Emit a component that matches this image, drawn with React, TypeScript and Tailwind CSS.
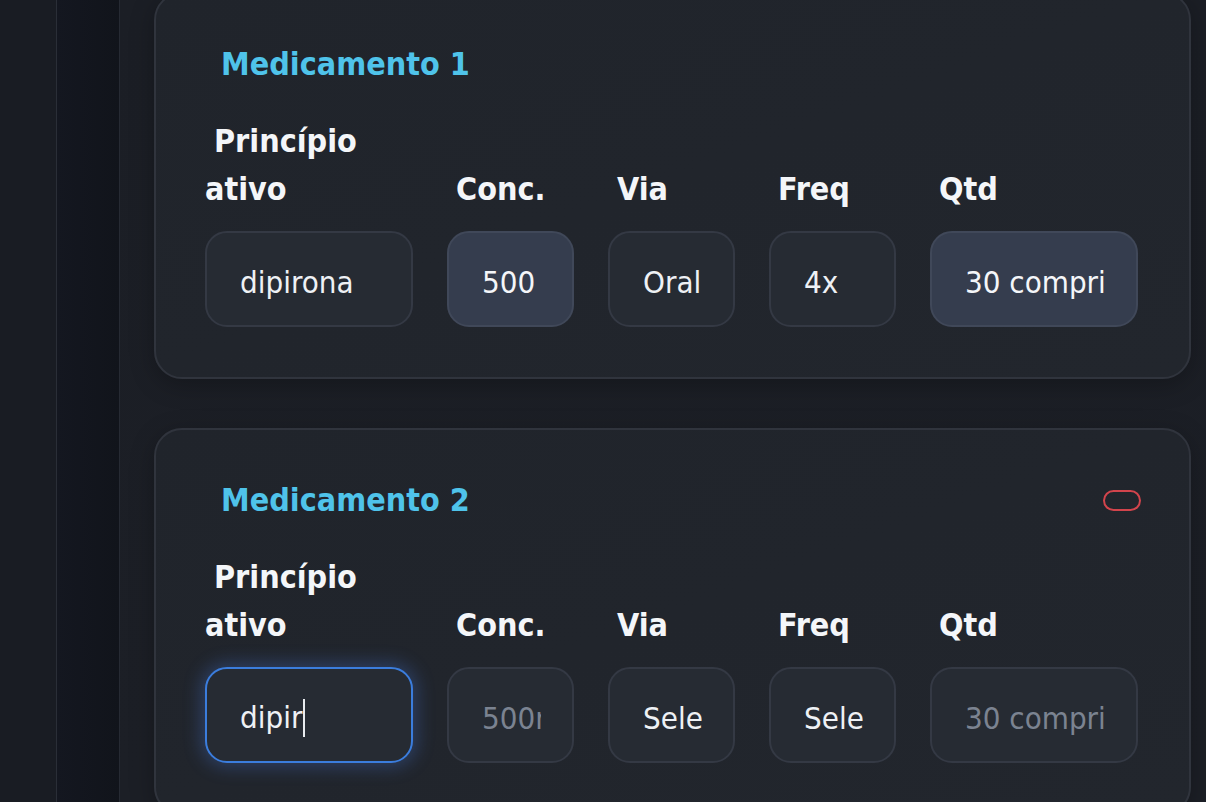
import React from "react";

const labelFont = "font-['DejaVu_Sans',sans-serif] [font-stretch:condensed]";

function Label({ first, second }: { first: string; second?: string }) {
  return (
    <div className={`${labelFont} text-[32px] leading-[48px] font-bold text-[#f4f6f9]`}>
      {second ? (
        <>
          <span className="pl-[9px]">{first}</span>
          <br />
          <span>{second}</span>
        </>
      ) : (
        <span className="pl-[9px]">{first}</span>
      )}
    </div>
  );
}

type FieldProps = {
  value?: string;
  placeholder?: string;
  tone?: "plain" | "filled" | "focus";
};

function Field({ value, placeholder, tone = "plain" }: FieldProps) {
  const base =
    "h-[96px] w-full rounded-[22px] border-2 pl-[33px] pr-[31px] pt-[5px] text-[31px] font-['DejaVu_Sans',sans-serif] [font-stretch:condensed] outline-none";
  if (tone === "focus") {
    return (
      <div
        className={`${base} flex items-center overflow-hidden border-[#3b7ddd] bg-[#262b33] text-[#eef1f5] shadow-[0_0_18px_4px_rgba(70,120,220,0.32)]`}
      >
        <span>{value}</span>
        <span className="ml-[1px] h-[38px] w-[2px] bg-[#e8ebef]" />
      </div>
    );
  }
  const colors =
    tone === "filled"
      ? "border-[#404859] bg-[#353d4e] text-[#f4f6f9]"
      : "border-[#343944] bg-[#262b33] text-[#eef1f5]";
  return (
    <input
      readOnly
      value={value ?? ""}
      placeholder={placeholder}
      className={`${base} ${colors} placeholder:text-[#7b8391]`}
    />
  );
}

type Row = {
  title: string;
  remove?: boolean;
  fields: FieldProps[];
};

function Card({ title, remove, fields }: Row) {
  return (
    <div className="rounded-[28px] border-2 border-[#30343d] bg-gradient-to-br from-[#20242b] to-[#22262d] pl-[48px] pr-[50px] pt-[50px] pb-[50px] shadow-[0_6px_24px_rgba(0,0,0,0.25)]">
      <div className="flex items-center justify-between">
        <h2 className={`${labelFont} ml-[17px] text-[32px] leading-[40px] font-bold text-[#4fc3ea]`}>
          {title}
        </h2>
        {remove && (
          <button className="mr-[-2px] h-[21px] w-[38px] rounded-full border-2 border-[#d2444c] bg-transparent" />
        )}
      </div>
      <div className="mt-[33px] ml-[1px] grid grid-cols-[208px_127px_127px_127px_208px] items-end gap-x-[34px] gap-y-[18px]">
        <Label first="Princípio" second="ativo" />
        <Label first="Conc." />
        <Label first="Via" />
        <Label first="Freq" />
        <Label first="Qtd" />
        {fields.map((f, i) => (
          <Field key={i} {...f} />
        ))}
      </div>
    </div>
  );
}

export default function App() {
  return (
    <div className="flex h-[802px] w-[1206px] overflow-hidden bg-[#1a1d24]">
      <div className="w-[57px] shrink-0 border-r border-[#2a2e37] bg-[#191c23]" />
      <div className="w-[63px] shrink-0 border-r border-[#262a33] bg-gradient-to-r from-[#141720] to-[#11141b]" />
      <main className="flex flex-1 flex-col bg-gradient-to-b from-[#1b1e25] to-[#1c1f26] pl-[34px] pr-[15px]">
        <div className="mt-[-8px] flex flex-col gap-[49px]">
          <Card
            title="Medicamento 1"
            fields={[
              { value: "dipirona" },
              { value: "500", tone: "filled" },
              { value: "Oral" },
              { value: "4x" },
              { value: "30 comprimidos", tone: "filled" },
            ]}
          />
          <Card
            title="Medicamento 2"
            remove
            fields={[
              { value: "dipir", tone: "focus" },
              { placeholder: "500mg" },
              { value: "Selecione" },
              { value: "Selecione" },
              { placeholder: "30 comprimidos" },
            ]}
          />
        </div>
      </main>
    </div>
  );
}
